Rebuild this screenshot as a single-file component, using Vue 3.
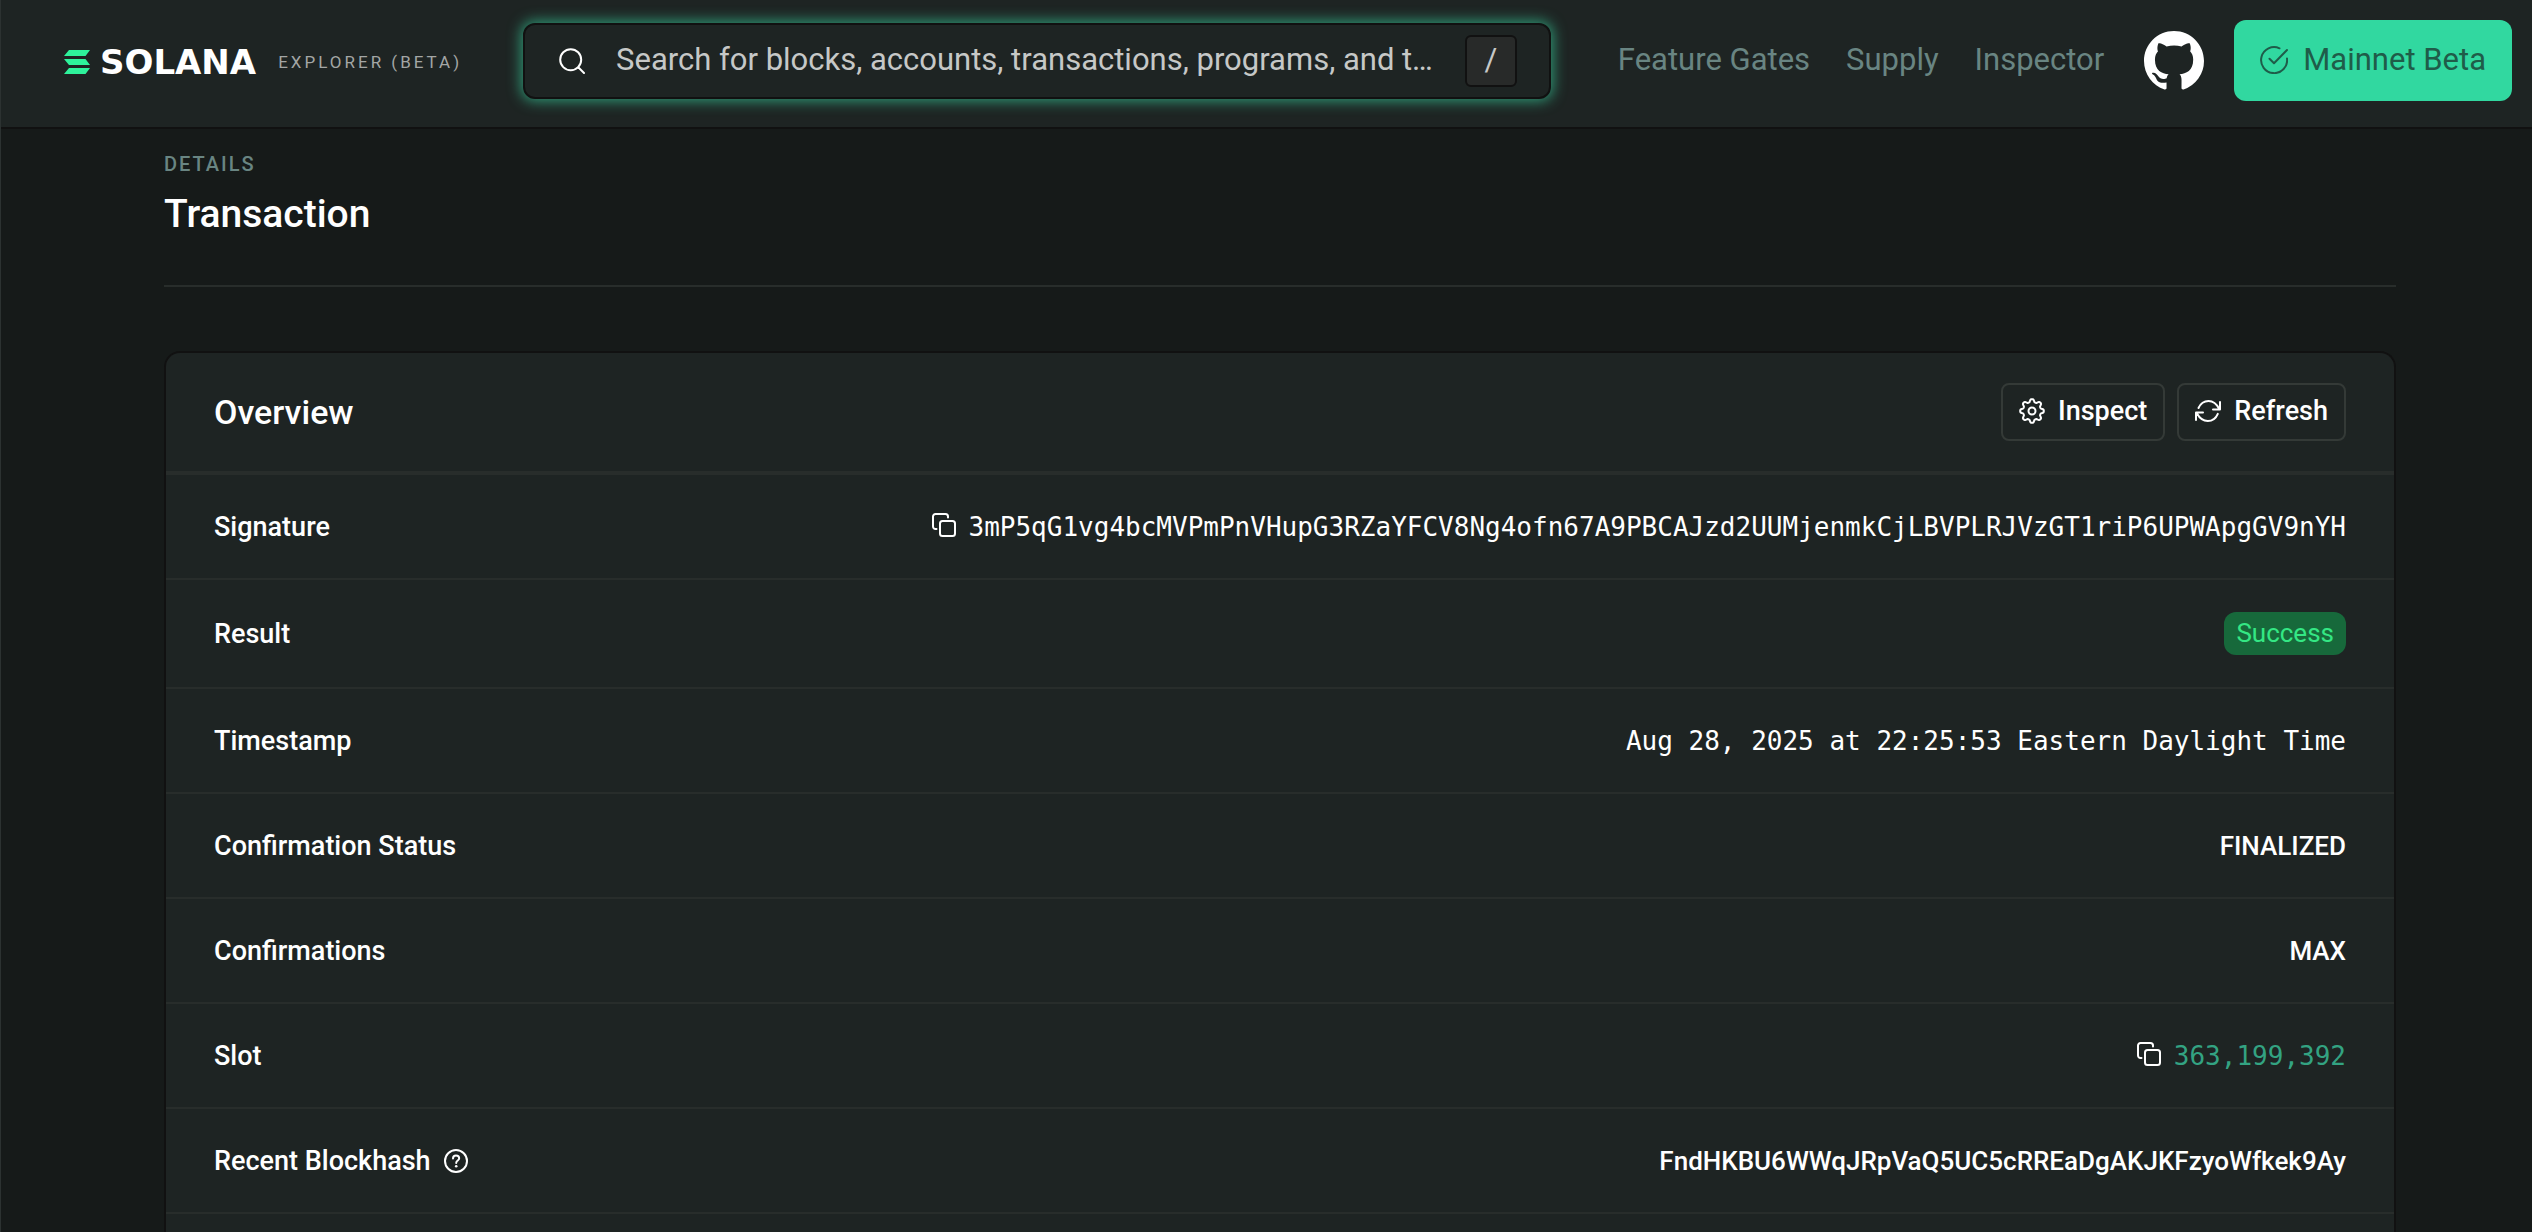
<script setup>
const links = ['Feature Gates', 'Supply', 'Inspector']

const rows = [
  { label: 'Signature', value: '3mP5qG1vg4bcMVPmPnVHupG3RZaYFCV8Ng4ofn67A9PBCAJzd2UUMjenmkCjLBVPLRJVzGT1riP6UPWApgGV9nYH', mono: true, copy: true },
  { label: 'Result', value: 'Success', badge: true },
  { label: 'Timestamp', value: 'Aug 28, 2025 at 22:25:53 Eastern Daylight Time', mono: true },
  { label: 'Confirmation Status', value: 'FINALIZED' },
  { label: 'Confirmations', value: 'MAX' },
  { label: 'Slot', value: '363,199,392', mono: true, copy: true, link: true },
  { label: 'Recent Blockhash', value: 'FndHKBU6WWqJRpVaQ5UC5cRREaDgAKJKFzyoWfkek9Ay', help: true },
]

// Eight-toothed cog outline with softly rounded teeth
const gearPath = Array.from({ length: 96 }, (_, i) => {
  const a = (i / 96) * 2 * Math.PI
  const r = 10.4 + 1.5 * Math.tanh(1.8 * Math.cos(8 * a))
  return `${i ? 'L' : 'M'}${(13 + r * Math.sin(a)).toFixed(2)} ${(13 - r * Math.cos(a)).toFixed(2)}`
}).join('') + 'Z'
</script>

<template>
  <div class="page">
    <header class="navbar">
      <a class="brand" href="#">
        <svg class="brand-mark" viewBox="0 0 26 24" aria-hidden="true">
          <path d="M5 0H26L21.5 6H0ZM0 9H21.5L26 15H5ZM5 18H26L21.5 24H0Z" fill="#2ef29b" />
        </svg>
        <span class="brand-name">SOLANA</span>
        <span class="brand-sub">EXPLORER (BETA)</span>
      </a>

      <label class="search">
        <svg class="search-icon" viewBox="0 0 26 26" aria-hidden="true">
          <circle cx="11.7" cy="11.7" r="10.5" />
          <path d="M19.5 19.5L25 25" />
        </svg>
        <input
          type="text"
          aria-label="Search"
          placeholder="Search for blocks, accounts, transactions, programs, and tokens"
        />
        <kbd>/</kbd>
      </label>

      <nav class="links">
        <a v-for="link in links" :key="link" href="#">{{ link }}</a>
      </nav>

      <a class="github" href="#" aria-label="GitHub">
        <svg viewBox="0 0 16 16" aria-hidden="true">
          <path fill="#fff" d="M8 0C3.58 0 0 3.58 0 8c0 3.54 2.29 6.53 5.47 7.59.4.07.55-.17.55-.38 0-.19-.01-.82-.01-1.49-2.01.37-2.53-.49-2.69-.94-.09-.23-.48-.94-.82-1.13-.28-.15-.68-.52-.01-.53.63-.01 1.08.58 1.23.82.72 1.21 1.87.87 2.33.66.07-.52.28-.87.51-1.07-1.78-.2-3.64-.89-3.64-3.95 0-.87.31-1.59.82-2.15-.08-.2-.36-1.02.08-2.12 0 0 .67-.21 2.2.82.64-.18 1.32-.27 2-.27s1.36.09 2 .27c1.53-1.04 2.2-.82 2.2-.82.44 1.1.16 1.92.08 2.12.51.56.82 1.27.82 2.15 0 3.07-1.87 3.75-3.65 3.95.29.25.54.73.54 1.48 0 1.07-.01 1.93-.01 2.2 0 .21.15.46.55.38A8.01 8.01 0 0016 8c0-4.42-3.58-8-8-8z" />
        </svg>
      </a>

      <button class="cluster" type="button">
        <svg viewBox="0 0 28 28" aria-hidden="true">
          <path d="M19.5 2.3A13 13 0 1 0 27 12.5M9.5 12.7L14 17.2L27 4" />
        </svg>
        Mainnet Beta
      </button>
    </header>

    <main class="content">
      <div class="heading">
        <p class="pretitle">DETAILS</p>
        <h1>Transaction</h1>
      </div>

      <section class="card">
        <div class="card-header">
          <h2>Overview</h2>
          <button class="action" type="button">
            <svg viewBox="0 0 26 26" aria-hidden="true">
              <path :d="gearPath" />
              <circle cx="13" cy="13" r="3.5" />
            </svg>
            Inspect
          </button>
          <button class="action" type="button">
            <svg viewBox="0 0 26 26" aria-hidden="true">
              <path d="M3.5 10C5.5 5.7 9 3 13.5 3C18 3 21.5 5.6 24.3 11M25 4V11.5H18M22.8 15.8C20.8 20.5 17.3 23 12.8 23C8.3 23 4.7 20.4 2 15.5M1 22V14.5H8" />
            </svg>
            Refresh
          </button>
        </div>

        <table>
          <tbody>
            <tr v-for="row in rows" :key="row.label" :class="{ tall: row.badge }">
              <th scope="row">
                <span class="cell">
                  {{ row.label }}
                  <svg v-if="row.help" class="help" viewBox="0 0 24 24" aria-hidden="true">
                    <circle cx="12" cy="12" r="11" />
                    <path d="M9 9.5C9 7.6 10.3 6.5 12 6.5C13.8 6.5 15.2 7.7 15.2 9.3C15.2 11.6 12.2 11.5 12.2 14" />
                    <circle class="dot" cx="12.2" cy="17.3" r="1.3" />
                  </svg>
                </span>
              </th>
              <td>
                <span class="cell end">
                  <button v-if="row.copy" class="copy" type="button" aria-label="Copy">
                    <svg viewBox="0 0 24 24" aria-hidden="true">
                      <rect x="8" y="8" width="15" height="15" rx="2.5" />
                      <path d="M16 4.5V3.5A2.5 2.5 0 0 0 13.5 1H3.5A2.5 2.5 0 0 0 1 3.5V13.5A2.5 2.5 0 0 0 3.5 16H4.5" />
                    </svg>
                  </button>
                  <a v-if="row.link" class="mono slot" href="#">{{ row.value }}</a>
                  <span v-else :class="{ mono: row.mono, badge: row.badge }">{{ row.value }}</span>
                </span>
              </td>
            </tr>
          </tbody>
        </table>
        <div class="card-rest"></div>
      </section>
    </main>
  </div>
</template>

<style>
body {
  background: #161a19;
}
</style>

<style scoped>
.page {
  display: flex;
  flex-direction: column;
  box-sizing: border-box;
  min-height: 100vh;
  border-left: 1px solid #2c3231;
  background: #161a19;
  color: #fff;
  font-family: Roboto, "Liberation Sans", sans-serif;
  font-size: 27px;
  font-weight: 500;
}

a {
  text-decoration: none;
}

button {
  font: inherit;
  cursor: pointer;
}

svg {
  display: block;
  flex: none;
  fill: none;
  stroke: none;
  stroke-linecap: round;
  stroke-linejoin: round;
}

.navbar {
  display: flex;
  align-items: center;
  box-sizing: border-box;
  min-height: 129px;
  padding: 20px 20px 26px 63px;
  border-bottom: 2px solid #111;
  background: #1e2423;
  font-size: 31px;
  font-weight: 400;
}

.brand {
  display: flex;
  align-items: center;
  margin-right: 61px;
  padding-top: 3px;
  color: #fff;
}

.brand-mark {
  width: 26px;
  height: 24px;
  margin-right: 10px;
}

.brand-name {
  margin-right: 22px;
  font-family: "DejaVu Sans", sans-serif;
  font-size: 34px;
  font-weight: 700;
  line-height: 40px;
}

.brand-sub {
  color: #a3a6a5;
  font-size: 17px;
  letter-spacing: 3px;
}

.search {
  display: flex;
  flex: 1;
  align-items: center;
  box-sizing: border-box;
  min-width: 0;
  height: 76px;
  padding: 0 32px 0 34px;
  border: 2px solid #111;
  border-radius: 12px;
  background: #1e2423;
  box-shadow: 0 0 14px 2px #2f9a77;
}

.search-icon {
  width: 26px;
  height: 26px;
  stroke: #fff;
  stroke-width: 2;
}

.search input {
  flex: 1;
  min-width: 0;
  margin: 0 20px 0 31px;
  padding: 0 0 2px;
  border: 0;
  outline: 0;
  background: transparent;
  color: #fff;
  font: inherit;
  text-overflow: ellipsis;
}

.search input::placeholder {
  color: #c6c8c7;
  opacity: 1;
}

kbd {
  box-sizing: border-box;
  width: 52px;
  height: 52px;
  border: 2px solid #111;
  border-radius: 6px;
  background: #282a29;
  color: #c6c8c7;
  font: inherit;
  line-height: 46px;
  text-align: center;
}

.links {
  display: flex;
  gap: 36px;
  margin: 0 40px 0 67px;
  padding-bottom: 2px;
  white-space: nowrap;
}

.links a {
  color: #698582;
}

.github {
  margin-right: 30px;
}

.github svg {
  width: 60px;
  height: 60px;
}

.cluster {
  display: flex;
  align-items: center;
  gap: 15px;
  height: 81px;
  padding: 0 26px 2px;
  border: 0;
  border-radius: 12px;
  background: #31d8a0;
  color: #1f5c49;
  white-space: nowrap;
}

.cluster svg {
  width: 28px;
  height: 28px;
  stroke: #1f5c49;
  stroke-width: 2;
}

.content {
  display: flex;
  flex: 1;
  flex-direction: column;
  padding: 23px 136px 0 163px;
}

.heading {
  padding-bottom: 47px;
  border-bottom: 2px solid #282d2b;
  margin-bottom: 64px;
}

.pretitle {
  margin: 0 0 14px;
  color: #698582;
  font-size: 20px;
  letter-spacing: 2px;
  line-height: 24px;
}

h1 {
  margin: 0;
  font-size: 39px;
  font-weight: 500;
  line-height: 48px;
}

.card {
  display: flex;
  flex: 1;
  flex-direction: column;
  border: 2px solid #111;
  border-bottom: 0;
  border-radius: 16px 16px 0 0;
  background: #1e2423;
}

.card-header {
  display: flex;
  align-items: center;
  gap: 12px;
  padding: 30px 48px;
  border-bottom: 2px solid #282d2b;
}

h2 {
  flex: 1;
  margin: 0;
  font-size: 34px;
  font-weight: 500;
  line-height: 40px;
}

.action {
  display: flex;
  align-items: center;
  gap: 13px;
  height: 58px;
  padding: 0 16px 2px;
  border: 2px solid #343a37;
  border-radius: 8px;
  background: transparent;
  color: #fff;
}

.action svg {
  width: 26px;
  height: 26px;
  stroke: #fff;
  stroke-width: 2;
}

table {
  width: 100%;
  border-collapse: separate;
  border-spacing: 0;
}

th,
td {
  box-sizing: border-box;
  height: 105px;
  padding: 0 48px;
  border-top: 2px solid #282d2b;
  font-weight: 500;
  text-align: left;
}

td {
  font-size: 26px;
}

.tall th,
.tall td {
  height: 109px;
}

.cell {
  display: flex;
  align-items: center;
  gap: 13px;
}

.end {
  justify-content: flex-end;
}

.mono {
  font-family: "DejaVu Sans Mono", monospace;
  font-weight: 400;
}

.slot {
  color: #33a382;
}

.badge {
  padding: 0 12px;
  border-radius: 12px;
  background: #17693b;
  color: #34e784;
  font-weight: 400;
  line-height: 43px;
}

.help {
  width: 24px;
  height: 24px;
  stroke: #fff;
  stroke-width: 2;
}

.help .dot {
  fill: #fff;
  stroke: none;
}

.copy {
  padding: 0 0 4px;
  border: 0;
  background: transparent;
}

.copy svg {
  width: 24px;
  height: 24px;
  stroke: #fff;
  stroke-width: 2;
}

.card-rest {
  flex: 1;
  border-top: 2px solid #282d2b;
}
</style>
